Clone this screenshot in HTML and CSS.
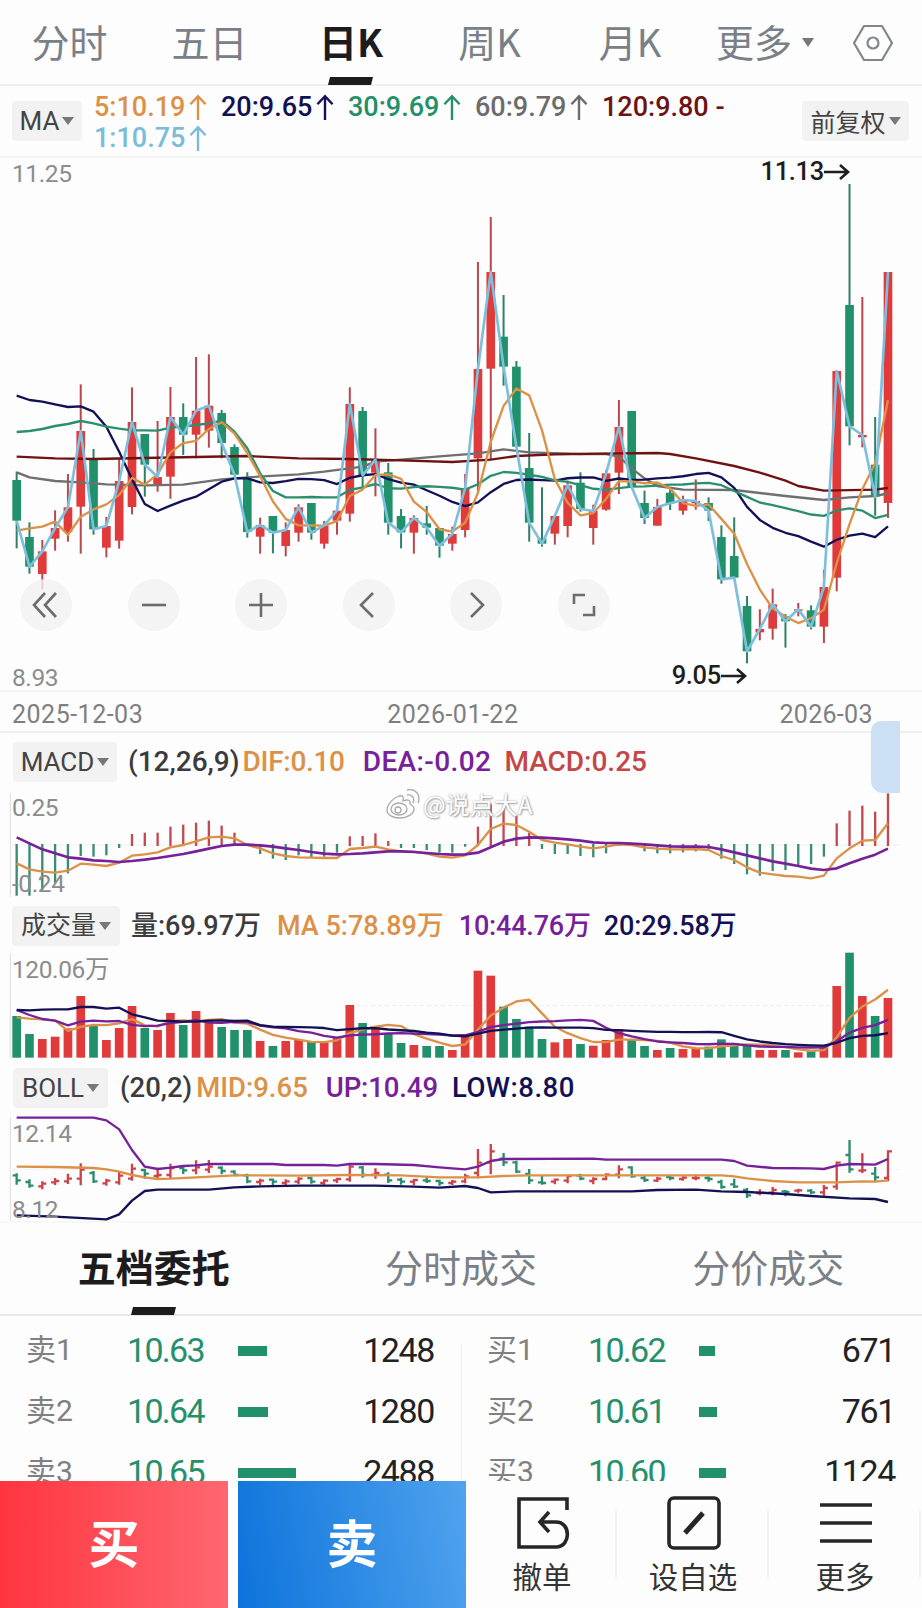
FILE: index.html
```html
<!DOCTYPE html>
<html lang="zh-CN">
<head>
    <meta charset="UTF-8">
    <meta name="viewport" content="width=device-width, initial-scale=1.0">
    <title>日K</title>
    <link rel="stylesheet" href="styles.css">
</head>
<body>

    <svg class="defs" width="0" height="0">
        <symbol id="up" viewBox="0 0 16 24"><path d="M8 24V2M1 9.5L8 2l7 7.5" fill="none" stroke="currentColor" stroke-width="2.2"/></symbol>
        <symbol id="right" viewBox="0 0 26 18"><path d="M0 9h24M16 2l8 7-8 7" fill="none" stroke="currentColor" stroke-width="2.6"/></symbol>
    </svg>

    <div class="period-tabs">
        <span>分时</span>
        <span>五日</span>
        <span class="active">日K</span>
        <span>周K</span>
        <span>月K</span>
        <span>更多<i class="caret"></i></span>
        <span><svg width="42" height="38" viewBox="0 0 42 38" fill="none" stroke="#7f868c" stroke-width="2.2"><path d="M12 2h18l10 17-10 17H12L2 19z" stroke-linejoin="round"/><circle cx="21" cy="19" r="5.5"/></svg></span>
    </div>

    <div class="ma-row">
        <span class="select">MA<i class="caret"></i></span>
        <div class="ma-values">
            <span class="orange">5:10.19<svg class="up"><use href="#up"/></svg></span>
            <span class="navy">20:9.65<svg class="up"><use href="#up"/></svg></span>
            <span class="green">30:9.69<svg class="up"><use href="#up"/></svg></span>
            <span class="gray">60:9.79<svg class="up"><use href="#up"/></svg></span>
            <span class="maroon">120:9.80 -</span>
            <span class="sky">1:10.75<svg class="up"><use href="#up"/></svg></span>
        </div>
        <span class="select adjust">前复权<i class="caret"></i></span>
    </div>

    <div class="panel k-panel">
        <svg id="k-chart" width="922" height="534" viewBox="0 -6 2766 1602"></svg>
        <span class="axis top">11.25</span>
        <span class="axis bottom">8.93</span>
        <span class="mark high">11.13<svg class="right"><use href="#right"/></svg></span>
        <span class="mark low">9.05<svg class="right"><use href="#right"/></svg></span>
        <div class="tools">
            <button><svg viewBox="0 0 52 52"><path d="M25 14L14 26l11 12M36 14L25 26l11 12"/></svg></button>
            <button><svg viewBox="0 0 52 52"><path d="M14 26h24"/></svg></button>
            <button><svg viewBox="0 0 52 52"><path d="M14 26h24M26 14v24"/></svg></button>
            <button><svg viewBox="0 0 52 52"><path d="M30 14L18 26l12 12"/></svg></button>
            <button><svg viewBox="0 0 52 52"><path d="M21 14l12 12-12 12"/></svg></button>
            <button><svg viewBox="0 0 52 52"><path d="M16 25v-9h11M36 27v9H25"/></svg></button>
        </div>
    </div>
    <div class="dates"><span>2025-12-03</span><span>2026-01-22</span><span>2026-03</span></div>

    <div class="ind-head macd-head">
        <span class="select">MACD<i class="caret"></i></span>
        <span class="dark params">(12,26,9)</span>
        <span class="orange">DIF:0.10</span>
        <span class="purple">DEA:-0.02</span>
        <span class="red">MACD:0.25</span>
        <div class="handle"></div>
    </div>
    <div class="panel macd-panel">
        <svg id="macd-chart" width="922" height="111" viewBox="0 180 2766 333"></svg>
        <span class="axis top">0.25</span>
        <span class="axis bottom">-0.24</span>
        <div class="watermark">
            <svg width="36" height="32" viewBox="0 0 36 32"><path d="M14 8c-6 2-12 9-12 14s6 8 13 8 14-4 14-9c0-3-2-4-4-5 1-4-2-5-7-3 1-4 0-6-4-5z"/><ellipse cx="14" cy="21" rx="8" ry="6"/><circle cx="13" cy="22" r="3"/><path d="M22 7c5-1 8 3 6 8M22 2c9-2 14 5 11 13"/></svg>
            <span>@说点大A</span>
        </div>
    </div>

    <div class="ind-head vol-head">
        <span class="select">成交量<i class="caret"></i></span>
        <span class="dark">量:69.97万</span>
        <span class="orange">MA 5:78.89万</span>
        <span class="purple">10:44.76万</span>
        <span class="navy">20:29.58万</span>
    </div>
    <div class="panel vol-panel">
        <svg id="vol-chart" width="922" height="110" viewBox="0 153 2766 330"></svg>
        <span class="axis top">120.06万</span>
    </div>

    <div class="ind-head boll-head">
        <span class="select">BOLL<i class="caret"></i></span>
        <span class="dark params">(20,2)</span>
        <span class="orange">MID:9.65</span>
        <span class="purple">UP:10.49</span>
        <span class="navy">LOW:8.80</span>
    </div>
    <div class="panel boll-panel">
        <svg id="boll-chart" width="922" height="110" viewBox="0 639 2766 330"></svg>
        <span class="axis top">12.14</span>
        <span class="axis bottom">8.12</span>
    </div>

    <div class="book-tabs">
        <span class="active">五档委托</span>
        <span>分时成交</span>
        <span>分价成交</span>
    </div>

    <div class="book">
        <div class="side" id="asks"></div>
        <div class="side" id="bids"></div>
    </div>

    <div class="footer">
        <div class="buy">买</div>
        <div class="sell">卖</div>
        <div class="action">
            <svg width="54" height="54" viewBox="0 0 54 54"><path d="M51 14V3H3v48h38c14-1 14-25-1-25H25M33 16L24 26l9 10"/></svg>
            <span>撤单</span>
        </div>
        <div class="action">
            <svg width="54" height="54" viewBox="0 0 54 54"><rect x="2" y="2" width="50" height="50" rx="5"/><path d="M18 37l18-20" stroke-width="5"/></svg>
            <span>设自选</span>
        </div>
        <div class="action">
            <svg width="54" height="54" viewBox="0 0 54 54"><path d="M1 9h52M1 27h52M1 45h52"/></svg>
            <span>更多</span>
        </div>
    </div>

    <script src="script.js"></script>
</body>
</html>
```
FILE: styles.css
```css
* {
    box-sizing: border-box;
}
body {
    margin: 0;
    width: 922px;
    height: 1608px;
    overflow: hidden;
    background: #fdfdfd;
    font-family: Roboto, "Noto Sans CJK SC", sans-serif;
    color: #222;
}
.defs {
    position: absolute;
}
.orange { color: #dc9148; }
.navy { color: #131155; }
.green { color: #239069; }
.gray { color: #6c6c6c; }
.maroon { color: #6e1214; }
.sky { color: #7bbcdb; }
.purple { color: #76209a; }
.red { color: #c34746; }
.dark { color: #3b3b3d; }

.caret {
    display: inline-block;
    border: 6px solid transparent;
    border-top: 8px solid #777;
    border-bottom: 0;
    margin-left: 3px;
    vertical-align: middle;
}

/* period tabs */
.period-tabs {
    display: grid;
    grid-template-columns: 139px 141px 142px 135px 146px 124px 95px;
    height: 86px;
    border-bottom: 2px solid #efefef;
    font-family: "Noto Sans CJK SC", sans-serif;
    font-size: 38px;
    line-height: 82px;
    text-align: center;
    color: #7a8087;
}
.period-tabs span {
    position: relative;
    white-space: nowrap;
}
.period-tabs span:last-child {
    padding-right: 3px;
}
.period-tabs svg {
    display: block;
    margin: 24px auto 0;
}
.period-tabs .caret {
    margin-left: 10px;
    margin-top: -8px;
    border-width: 9px 6px 0;
}
.active {
    color: #1c1c1e;
    font-weight: bold;
}
.active::after {
    content: "";
    position: absolute;
    left: 50%;
    bottom: -1px;
    width: 43px;
    height: 8px;
    margin-left: -22px;
    background: #1c1c1e;
    transform: skewX(-14deg);
}

/* moving averages */
.select {
    display: flex;
    align-items: center;
    justify-content: center;
    height: 40px;
    border-radius: 4px;
    background: #f2f2f2;
    color: #444;
    font-size: 26px;
    white-space: nowrap;
}
.ma-row {
    display: flex;
    height: 72px;
    padding: 0 13px 0 12px;
    border-bottom: 2px solid #f4f4f4;
}
.ma-row .select {
    width: 70px;
    margin-top: 15px;
}
.ma-row .adjust {
    width: 107px;
    font-size: 25px;
}
.ma-values {
    flex: 1;
    display: grid;
    grid-template-columns: repeat(5, 127px);
    grid-auto-rows: 31px;
    padding: 6px 0 0 12px;
    font-size: 27px;
    font-weight: 500;
    line-height: 31px;
}
.ma-values span {
    white-space: nowrap;
}
.up {
    width: 18px;
    height: 26px;
    margin-left: 4px;
    vertical-align: -4px;
}

/* charts */
.panel {
    position: relative;
}
.panel > svg {
    display: block;
}
.axis {
    position: absolute;
    left: 12px;
    font-size: 24.5px;
    letter-spacing: -0.4px;
    line-height: 26px;
    color: #8c8c8c;
}
.mark {
    position: absolute;
    font-size: 25.5px;
    letter-spacing: -0.3px;
    line-height: 26px;
    font-weight: 500;
    color: #1e1e1e;
}
.right {
    width: 26px;
    height: 18px;
    vertical-align: -1px;
}
.k-panel {
    height: 534px;
    border-bottom: 2px solid #f3f3f3;
}
.k-panel .top { top: 3px; }
.k-panel .bottom { top: 507px; }
.high {
    right: 72px;
    top: 0;
}
.low {
    right: 175px;
    top: 504px;
}
.tools {
    position: absolute;
    left: 20px;
    top: 421px;
    display: flex;
    gap: 55.5px;
}
.tools button {
    width: 52px;
    height: 52px;
    padding: 0;
    border: 0;
    border-radius: 50%;
    background: rgba(241, 241, 242, 0.8);
}
.tools svg {
    display: block;
    fill: none;
    stroke: #6c6c6c;
    stroke-width: 2.6;
}
.dates {
    display: flex;
    gap: 244px;
    height: 41px;
    padding-left: 12px;
    border-bottom: 2px solid #f0f0f0;
    font-size: 25px;
    letter-spacing: 0.5px;
    line-height: 46px;
    color: #7f7f7f;
}
.dates span:last-child {
    margin-left: 17px;
    letter-spacing: 0.3px;
}

.ind-head {
    position: relative;
    display: flex;
    align-items: flex-start;
    font-size: 28px;
    font-weight: 500;
    line-height: 40px;
    white-space: nowrap;
}
.ind-head .select {
    font-weight: 400;
}
.macd-head {
    height: 57px;
    padding: 9px 0 0 13px;
}
.macd-head .select {
    width: 104px;
    margin-right: 11px;
}
.macd-head .orange {
    margin: 0 18px 0 3px;
    letter-spacing: -0.3px;
}
.macd-head .purple {
    margin-right: 13px;
    letter-spacing: 0.4px;
}
.handle {
    position: absolute;
    left: 871px;
    top: -12px;
    width: 29px;
    height: 72px;
    border-radius: 10px 0 0 12px;
    background: #cce0f5;
    filter: blur(0.6px);
}
.macd-panel { height: 111px; }
.macd-panel .top { top: 5px; }
.macd-panel .bottom { top: 81px; }
.watermark {
    position: absolute;
    left: 385px;
    top: -3px;
    display: flex;
    align-items: center;
    gap: 2px;
    height: 34px;
    font-family: "Noto Sans CJK SC", sans-serif;
    font-size: 24px;
    line-height: 30px;
    color: #fff;
    text-shadow: 1px 1px 2px #999, 0 0 2px #aaa;
}
.watermark svg {
    fill: #fff;
    stroke: #aaa;
    stroke-width: 1.3;
}
.vol-head {
    height: 50px;
    padding: 5px 0 0 12px;
    font-size: 27px;
}
.vol-head .select {
    width: 108px;
    margin-right: 11px;
    font-size: 25px;
}
.vol-head .orange { margin: 0 15px 0 16px; }
.vol-head .purple {
    margin-right: 13px;
    letter-spacing: -0.2px;
}
.vol-head .navy {
    letter-spacing: -0.1px;
}
.vol-panel { height: 110px; }
.vol-panel .top { top: 6px; }
.boll-head {
    height: 52px;
    padding: 7px 0 0 13px;
    font-size: 27.5px;
}
.boll-head .select {
    width: 95px;
    margin-right: 12px;
}
.boll-head .orange { margin: 0 18px 0 4px; }
.boll-head .purple {
    margin-right: 14px;
    letter-spacing: -0.1px;
}
.boll-head .navy {
    letter-spacing: 0.5px;
}
.boll-panel {
    height: 110px;
    border-bottom: 2px solid #f7f7f7;
}
.boll-panel .top { top: 8px; }
.boll-panel .bottom { top: 84px; }

/* order book */
.book-tabs {
    display: grid;
    grid-template-columns: repeat(3, 1fr);
    height: 93px;
    border-bottom: 2px solid #e8e8e8;
    font-family: "Noto Sans CJK SC", sans-serif;
    font-size: 38px;
    line-height: 86px;
    text-align: center;
    color: #7a8087;
}
.book-tabs span {
    position: relative;
}
.book {
    position: relative;
    display: flex;
    height: 165px;
    overflow: hidden;
}
.book::after {
    content: "";
    position: absolute;
    left: 461px;
    top: 28px;
    bottom: 0;
    border-left: 1px solid #eee;
}
.side {
    width: 461.5px;
    padding-top: 4px;
}
.level {
    display: grid;
    grid-template-columns: 101px 111px 80px 1fr;
    align-items: center;
    height: 61.3px;
    padding: 0 27px 0 26px;
    font-size: 34px;
    letter-spacing: -1.7px;
    line-height: 40px;
}
.level span {
    position: relative;
    top: -1px;
}
.level .name {
    font-size: 30px;
    letter-spacing: 0;
    color: #808080;
}
.price {
    color: #26906a;
}
.amount-bar {
    height: 10px;
    background: #20916b;
}
.amount {
    text-align: right;
    letter-spacing: -1.4px;
}

/* bottom bar */
.footer {
    display: grid;
    grid-template-columns: 228px 228px 150px 152px 152px;
    height: 128px;
}
.buy, .sell {
    font-family: "Noto Sans CJK SC", sans-serif;
    font-size: 51px;
    font-weight: bold;
    line-height: 121px;
    text-align: center;
    color: #fff;
}
.buy {
    background: linear-gradient(90deg, #ff353e, #ff6771);
}
.sell {
    margin-left: 10px;
    margin-right: -10px;
    background: linear-gradient(80deg, #0d73db, #50a3ee);
}
.action {
    position: relative;
    left: 11px;
    display: flex;
    flex-direction: column;
    align-items: center;
    padding-top: 15px;
    font-size: 29.5px;
    line-height: 40px;
    color: #333;
}
.action::after {
    content: "";
    position: absolute;
    right: 0;
    top: 30px;
    height: 66px;
    border-right: 2px solid #f1f1f1;
}
.action svg {
    margin: 0 0 8px 1px;
    fill: none;
    stroke: #262626;
    stroke-width: 3.6;
}
```
FILE: script.js
```js
const RED = '#e03a3b', GREEN = '#20916b';
const ORANGE = '#dc9148', NAVY = '#131155', PURPLE = '#76209a';
const STEP = 38.44;
const x = i => 50 + i * STEP;

// high, body top, body bottom, low, color
const candles = [
    [935,960,1082,1165,'g'],[1087,1131,1220,1241,'g'],[1140,1174,1242,1288,'r'],[1051,1104,1136,1172,'r'],
    [942,1042,1116,1145,'r'],[673,813,1040,1181,'r'],[867,897,1108,1124,'g'],[1071,1098,1163,1192,'r'],
    [894,963,1142,1166,'r'],[682,786,1041,1063,'r'],[822,822,914,1010,'g'],[783,951,972,995,'r'],
    [681,771,950,1016,'r'],[730,771,824,885,'g'],[591,752,824,895,'r'],[583,737,812,863,'r'],
    [750,759,849,895,'g'],[853,861,944,944,'g'],[937,955,1116,1133,'g'],[1073,1095,1130,1181,'r'],
    [1068,1068,1118,1180,'g'],[1087,1110,1158,1189,'r'],[1033,1042,1118,1145,'r'],[1029,1029,1118,1139,'g'],
    [1083,1096,1151,1166,'r'],[1040,1052,1082,1124,'r'],[682,732,1061,1085,'r'],[741,753,946,980,'g'],
    [805,899,938,1009,'r'],[909,937,1088,1124,'g'],[1047,1068,1117,1165,'g'],[1066,1074,1118,1181,'r'],
    [1038,1090,1103,1124,'g'],[1104,1104,1157,1193,'g'],[1100,1122,1151,1172,'r'],[942,984,1110,1132,'r'],
    [306,627,895,1000,'r'],[171,336,626,900,'r'],[405,530,620,677,'g'],[603,620,860,860,'g'],
    [819,924,1088,1145,'g'],[982,1135,1151,1160,'g'],[1065,1068,1121,1154,'r'],[962,976,1098,1132,'r'],
    [937,968,1047,1055,'g'],[1034,1053,1104,1154,'r'],[930,940,1049,1052,'r'],[720,801,938,1002,'r'],
    [753,753,981,981,'g'],[992,1029,1074,1092,'g'],[1017,1041,1097,1097,'r'],[987,998,1030,1050,'g'],
    [1007,1020,1052,1064,'r'],[958,1023,1030,1049,'r'],[1012,1029,1052,1083,'g'],[1096,1131,1258,1271,'g'],
    [1072,1188,1253,1253,'g'],[1308,1338,1474,1510,'g'],[1348,1407,1417,1441,'r'],[1286,1333,1406,1439,'r'],
    [1362,1369,1384,1463,'g'],[1329,1348,1352,1369,'r'],[1336,1351,1400,1408,'g'],[1229,1281,1400,1449,'r'],
    [633,633,1253,1294,'r'],[72,435,799,856,'g'],[411,825,832,862,'r'],[771,914,1010,1067,'g'],
    [336,336,1029,1074,'r']
];
const close = candles.map(c => c[4] === 'r' ? c[1] : c[2]);

const macd = [497,497,482,458,430,378,380,376,354,312,308,308,290,284,278,272,287,308,345,372,386,390,376,382,380,
    368,319,318,310,333,354,354,360,368,368,350,290,223,232,257,308,357,372,372,378,382,370,348,346,364,370,370,
    367,364,358,386,402,433,437,423,420,407,402,380,280,242,227,245,190];
const dif = [400,418,425,428,422,401,404,408,398,377,373,367,352,345,334,322,320,325,345,355,370,378,382,383,384,
    384,357,354,350,358,364,365,371,380,383,376,345,297,281,285,305,330,338,343,350,355,350,343,345,352,356,358,
    358,357,360,378,390,412,428,433,438,440,445,437,385,355,332,330,280];
const dea = [322,340,358,370,382,386,391,393,396,393,389,384,378,372,364,356,348,344,344,346,350,355,360,366,371,
    373,372,370,367,364,364,366,369,372,374,373,368,352,335,326,322,323,325,328,332,337,339,339,341,343,346,349,
    350,350,351,358,367,376,385,394,401,408,416,420,415,400,386,374,356];
const volume = [348,402,417,410,385,288,375,420,384,318,384,390,339,375,333,360,381,390,390,423,438,423,420,423,427,
    412,315,369,378,400,429,435,438,438,450,406,212,227,320,357,380,417,427,417,432,437,420,388,418,438,450,444,
    447,445,440,418,430,432,450,450,450,457,454,440,258,158,288,348,294];

function average(values, n, start) {
    return values.map((v, i) => i < start.length ? start[i]
        : values.slice(i - n + 1, i + 1).reduce((a, b) => a + b, 0) / n);
}

function line(points, color, width = 7) {
    const pts = points.map((p, i) => Array.isArray(p) ? x(p[0]) + ',' + p[1] : x(i) + ',' + p.toFixed(1));
    return `<polyline points="${pts.join(' ')}" fill="none" stroke="${color}" stroke-width="${width}" stroke-linejoin="round"/>`;
}

function rect(cx, y, w, h, color) {
    return `<rect x="${(cx - w / 2).toFixed(1)}" y="${y}" width="${w}" height="${h}" fill="${color}"/>`;
}

function hline(y, color = '#f1f1f1') {
    return `<path d="M31 ${y}H2700" stroke="${color}" stroke-width="3"/>`;
}

const colorOf = i => candles[i][4] === 'r' ? RED : GREEN;

// daily candles
let out = '';
candles.forEach(([h, t, b, l], i) => {
    const wick = candles[i][4] === 'r' ? '#b9484c' : '#2f8068';
    out += rect(x(i), h, 6, l - h, wick) + rect(x(i), t, 26, b - t, colorOf(i));
});
out += line([[0,937],[1,952],[3,963],[5,967],[7,973],[10,976],[13,974],[16,958],[18,952],[22,943],[24,935],[27,920],
    [28,905],[30,899],[33,889],[36,880],[38,868],[40,877],[44,882],[46,882],[47,890],[48,925],[49,955],[50,978],
    [52,989],[56,990],[60,1008],[63,1020],[65,1012],[67,1008],[68,1000]], '#6f6f6f');
out += line([[0,890],[3,895],[6,897],[14,891],[18,888],[22,895],[26,897],[30,901],[34,906],[37,899],[39,888],[42,883],
    [47,880],[50,879],[51,882],[53,895],[56,918],[58,938],[60,962],[61,978],[63,992],[67,989],[68,984]], '#6e1214');
out += line(average(close, 20, [707,720,725,733,741,739,755,800,875,958,1032,1053,1037,1022,1010,988,965,955,955]), NAVY);
out += line(average(close, 30, [816,813,807,798,792,783,790,800,806,811,811,812,803,800,795,790,782,815,865,940,
    993,1012,1012,1011,1012,1012,990,982,972]), '#2b8f6f');
out += line(average(close, 5, [1112,1105,1100,1085]), ORANGE);
out += line(close, '#7dbfdd', 8);
document.getElementById('k-chart').innerHTML = out;

// macd
out = '<path d="M31 190V500" stroke="#ddd" stroke-width="3"/>' + hline(345);
macd.forEach((v, i) => {
    out += v > 345 ? rect(x(i), 342, 7, v - 342, '#3a8c74') : rect(x(i), v, 7, 348 - v, '#c14a50');
});
out += line(dif, ORANGE) + line(dea, PURPLE, 8);
document.getElementById('macd-chart').innerHTML = out;

// volume
out = '<path d="M31 160V475" stroke="#ddd" stroke-width="3"/>'
    + '<path d="M1050 317H2600" stroke="#eee" stroke-width="3" stroke-dasharray="12 9"/>';
volume.forEach((v, i) => {
    out += rect(x(i), v, 26, 473 - v, colorOf(i));
});
out += line(average(volume, 5, [352,356,358,362]), ORANGE);
out += line(average(volume, 10, [330,345,357,362,376,365,362,364,363]), PURPLE);
out += line(average(volume, 20, [330,331,329,328,328,321,321,326,323,343,352,362,363,365,365,362,361,363,362]), NAVY);
document.getElementById('vol-chart').innerHTML = out;

// boll
const by = v => Math.round(715 + v * 0.116);
out = '<path d="M31 652V962" stroke="#ddd" stroke-width="3"/>' + hline(808, '#f5f5f5');
candles.forEach(([h, t, b, l, c], i) => {
    const open = c === 'r' ? b : t, end = c === 'r' ? t : b;
    out += `<path d="M${x(i)} ${by(h) - 3}V${by(l) + 4}M${x(i) - 12} ${by(open)}H${x(i)}V${by(end)}H${x(i) + 12}" fill="none" stroke="${c === 'r' ? '#cc4348' : '#2c8c6e'}" stroke-width="7"/>`;
});
out += line([[0,800],[3,801],[6,804],[7,808],[8,815],[9,825],[10,832],[11,837],[12,836],[14,832],[17,826],[22,827],
    [26,825],[30,826],[33,832],[36,832],[38,828],[40,826],[55,826],[56,829],[57,835],[59,843],[61,847],[64,847],
    [66,844],[67,845],[68,841]], ORANGE);
out += line([[0,653],[6,653],[7,661],[8,688],[9,750],[10,800],[11,807],[12,803],[13,798],[14,796],[15,792],[20,792],
    [21,795],[24,795],[25,797],[26,792],[28,792],[31,795],[33,802],[35,808],[36,800],[37,783],[38,777],[45,776],
    [46,779],[55,779],[56,783],[57,797],[59,804],[62,805],[63,807],[64,797],[65,792],[67,794],[68,777]], PURPLE);
out += line([[0,946],[3,950],[7,958],[8,943],[9,902],[10,873],[11,869],[15,869],[17,862],[19,859],[22,857],[28,857],
    [31,860],[33,863],[35,858],[36,864],[37,877],[39,874],[48,874],[50,870],[53,869],[55,874],[57,876],[60,882],
    [62,888],[65,895],[67,897],[68,906]], NAVY);
document.getElementById('boll-chart').innerHTML = out;

// order book
function fillBook(id, rows) {
    document.getElementById(id).innerHTML = rows.map(([name, price, width, amount]) =>
        `<div class="level"><span class="name">${name}</span><span class="price">${price}</span>` +
        `<div class="amount-bar" style="width: ${width}px"></div><span class="amount">${amount}</span></div>`).join('');
}
fillBook('asks', [['卖1', '10.63', 29, 1248], ['卖2', '10.64', 30, 1280], ['卖3', '10.65', 58, 2488]]);
fillBook('bids', [['买1', '10.62', 16, 671], ['买2', '10.61', 18, 761], ['买3', '10.60', 27, 1124]]);
```
